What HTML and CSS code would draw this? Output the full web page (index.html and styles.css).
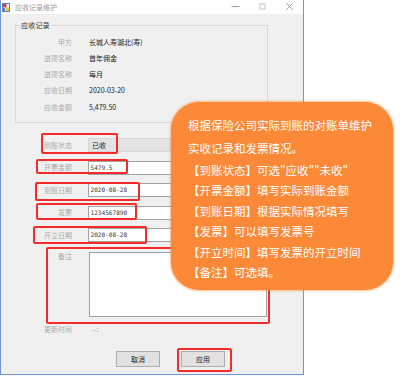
FILE: index.html
```html
<!DOCTYPE html>
<html lang="zh-CN">
<head>
<meta charset="utf-8">
<title>应收记录维护</title>
<link rel="stylesheet" href="styles.css">
</head>
<body>
<div class="stage">
  <div class="window">
    <div class="titlebar">
      <svg class="app-icon" width="8" height="9" viewBox="0 0 8 9">
        <rect x="0.5" y="0.5" width="7" height="8" fill="#fff" stroke="#5b7fc7"/>
        <rect x="1" y="1" width="3.5" height="3.5" fill="#e23b2b"/>
        <rect x="3.5" y="4.5" width="3.5" height="3.5" fill="#f2c12e"/>
        <rect x="1" y="5" width="2" height="3" fill="#4b8ad6"/>
      </svg>
      <span class="title">应收记录维护</span>
      <div class="controls">
        <span class="ctl"><svg width="9" height="9" viewBox="0 0 9 9"><path d="M0.5 4.5H8.5" stroke="#9a9a9a" stroke-width="1"/></svg></span>
        <span class="ctl"><svg width="9" height="9" viewBox="0 0 9 9"><rect x="2" y="2" width="5" height="5" fill="none" stroke="#c4c4c4" stroke-width="1"/></svg></span>
        <span class="ctl"><svg width="9" height="9" viewBox="0 0 9 9"><path d="M1.5 1.5L7.5 7.5M7.5 1.5L1.5 7.5" stroke="#9a9a9a" stroke-width="1"/></svg></span>
      </div>
    </div>
    <div class="client">
      <fieldset class="group">
        <legend>应收记录</legend>
        <div class="info-grid">
          <span class="lbl">甲方</span><span class="val">长城人寿湖北(寿)</span>
          <span class="lbl">进项名称</span><span class="val">首年佣金</span>
          <span class="lbl">进项名称</span><span class="val">每月</span>
          <span class="lbl">应收日期</span><span class="val">2020-03-20</span>
          <span class="lbl">应收金额</span><span class="val">5,479.50</span>
        </div>
      </fieldset>
      <div class="form">
        <div class="row first"><span class="lbl">到账状态</span><div class="combo">已收</div></div>
        <div class="row"><span class="lbl">开票金额</span><div class="input">5479.5</div></div>
        <div class="row"><span class="lbl">到账日期</span><div class="input">2020-08-28</div></div>
        <div class="row"><span class="lbl">发票</span><div class="input">1234567890</div></div>
        <div class="row"><span class="lbl">开立日期</span><div class="input">2020-08-28</div></div>
        <div class="row memo"><span class="lbl">备注</span><div class="textarea"></div></div>
        <div class="row update"><span class="lbl">更新时间</span><span class="muted">--:</span></div>
      </div>
      <div class="buttons">
        <button class="btn">取消</button>
        <button class="btn">应用</button>
      </div>
    </div>
  </div>

  <div class="mark m-status"></div>
  <div class="mark m-amount"></div>
  <div class="mark m-date"></div>
  <div class="mark m-invoice"></div>
  <div class="mark m-open"></div>
  <div class="mark m-memo"></div>
  <div class="mark m-apply"></div>

  <div class="bubble">
    <p class="intro">根据保险公司实际到账的对账单维护实收记录和发票情况。</p>
    <ul class="tips">
      <li>【到账状态】可选"应收""未收"</li>
      <li>【开票金额】填写实际到账金额</li>
      <li>【到账日期】根据实际情况填写</li>
      <li>【发票】可以填写发票号</li>
      <li>【开立时间】填写发票的开立时间</li>
      <li>【备注】可选填。</li>
    </ul>
  </div>
</div>
</body>
</html>
```

FILE: styles.css
```css
* { box-sizing: border-box; }

html, body {
  margin: 0;
  padding: 0;
  background: #ffffff;
}

body {
  font-family: "Noto Sans CJK SC", "Noto Sans", sans-serif;
  width: 400px;
  height: 376px;
  overflow: hidden;
}

.stage {
  position: relative;
  width: 400px;
  height: 376px;
}

.window {
  width: 304px;
  height: 375px;
  border: 1px solid #7393d6;
  border-top: none;
  background: #f0f0f0;
  display: flex;
  flex-direction: column;
}

.titlebar {
  height: 14px;
  background: #ffffff;
  display: flex;
  align-items: center;
  padding-left: 1px;
  flex: none;
}

.app-icon {
  display: block;
  margin-top: 1px;
}

.title {
  margin-left: 5px;
  font-size: 7px;
  line-height: 10px;
  color: #9a9a9a;
}

.controls {
  margin-left: auto;
  display: flex;
  height: 14px;
}

.ctl {
  width: 27px;
  height: 14px;
  display: flex;
  align-items: center;
  justify-content: center;
}

.ctl svg { display: block; margin-top: -1px; }

.client {
  flex: 1;
  display: flex;
  flex-direction: column;
}

.group {
  margin: 6px 0 0 14px;
  width: 253px;
  padding: 4px 0 7px 0;
  border: 1px solid #d9d9d9;
  min-width: 0;
}

.group legend {
  margin-left: 4px;
  padding: 0 1px;
  font-size: 7.2px;
  line-height: 10px;
  color: #333333;
}

.info-grid {
  display: grid;
  grid-template-columns: 56px auto;
  column-gap: 17px;
  grid-auto-rows: 16.25px;
  align-items: center;
}

.lbl {
  font-size: 7px;
  line-height: 9px;
  color: #ababab;
  text-align: right;
  white-space: nowrap;
}

.val {
  font-size: 7px;
  line-height: 9px;
  color: #222222;
  white-space: nowrap;
}

.form {
  display: flex;
  flex-direction: column;
  margin-top: 15px;
}

.row {
  display: grid;
  grid-template-columns: 71px 179px;
  column-gap: 16px;
  align-items: center;
  height: 14px;
  margin-top: 8.5px;
}

.row.first { margin-top: 0; }

.row.memo {
  height: 65px;
  margin-top: 10px;
  align-items: start;
}

.row.update {
  margin-top: 5px;
}

.combo {
  height: 14px;
  background: #e3e3e3;
  border: 1px solid #d6d6d6;
  font-size: 7px;
  line-height: 12px;
  color: #222222;
  padding-left: 3px;
}

.input {
  height: 14px;
  background: #ffffff;
  border: 1px solid #a3a3a3;
  font-family: "DejaVu Sans Mono", "Liberation Mono", monospace;
  font-size: 6.1px;
  line-height: 12px;
  color: #3a3a3a;
  padding-left: 1.5px;
}

.textarea {
  height: 65px;
  background: #ffffff;
  border: 1px solid #a0a0a0;
  margin-left: 1px;
}

.muted {
  font-size: 7px;
  line-height: 9px;
  color: #9a9a9a;
  padding-left: 4px;
}

.buttons {
  display: flex;
  gap: 21px;
  padding-left: 115px;
  margin-top: 15px;
}

.btn {
  width: 44px;
  height: 16px;
  margin: 0;
  padding: 0;
  background: #e1e1e1;
  border: 1px solid #adadad;
  font-family: "Noto Sans CJK SC", sans-serif;
  font-size: 7px;
  line-height: 14px;
  color: #222222;
}

.mark {
  position: absolute;
  border: 2px solid #f52a2a;
  border-radius: 2px;
}

.m-status  { left: 41px;  top: 133px; width: 77px;  height: 21px; }
.m-amount  { left: 36px;  top: 159px; width: 92px;  height: 15px; }
.m-date    { left: 35px;  top: 182px; width: 105px; height: 19px; }
.m-invoice { left: 36px;  top: 203px; width: 101px; height: 17px; }
.m-open    { left: 33px;  top: 226px; width: 114px; height: 18px; }
.m-memo    { left: 46px;  top: 247px; width: 224px; height: 77px; }
.m-apply   { left: 177px; top: 348px; width: 55px;  height: 24px; }

.bubble {
  position: absolute;
  left: 171px;
  top: 102px;
  width: 222px;
  height: 188px;
  border-radius: 28px;
  background: #fc8937;
  box-shadow: 0 0 2px 1px rgba(252, 137, 55, 0.55);
  color: #ffffff;
  font-size: 11.5px;
  padding: 11.5px 0 0 17px;
}

.intro {
  margin: 0;
  width: 190px;
  line-height: 23px;
}

.tips {
  list-style: none;
  margin: 0;
  padding: 0;
  line-height: 20.5px;
  white-space: nowrap;
}
```
